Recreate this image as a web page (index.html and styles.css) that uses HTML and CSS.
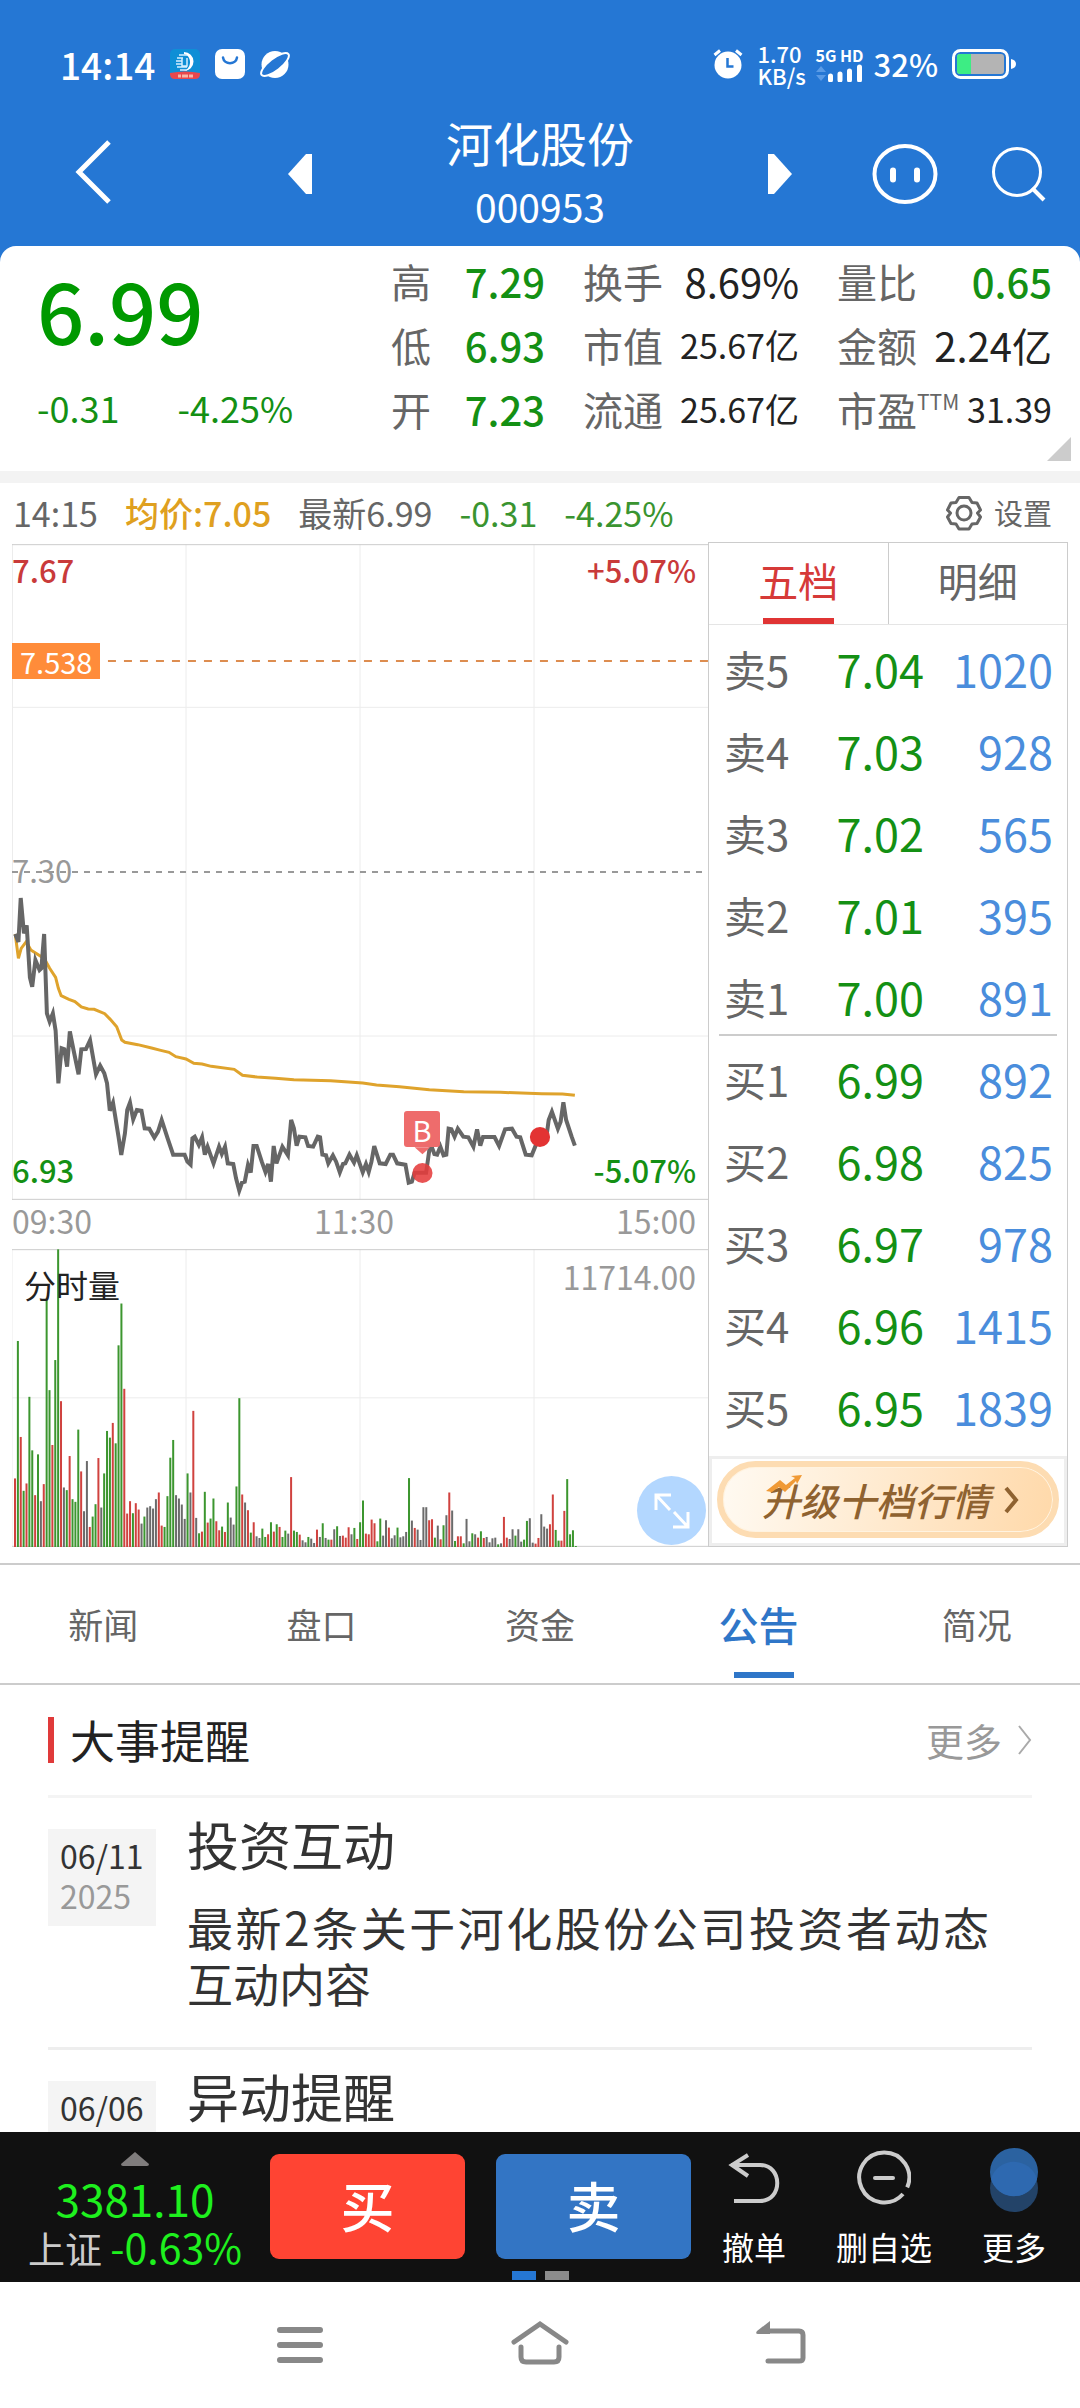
FILE: index.html
```html
<!DOCTYPE html>
<html lang="zh-CN">
<head>
<meta charset="utf-8">
<meta name="viewport" content="width=device-width, initial-scale=1">
<title>河化股份 000953</title>
<link rel="stylesheet" href="styles.css">
</head>
<body>
<div class="app">
  <header class="top">
    <div class="status">
      <span class="clock">14:14</span>
      <svg class="status-icon" width="30" height="30" viewBox="0 0 30 30" aria-hidden="true">
        <rect width="30" height="30" rx="5" fill="#0f8fd6"/>
        <path d="M0 24Q15 21 30 24V25Q30 30 25 30H5Q0 30 0 25Z" fill="#e8474c"/>
        <path d="M14 3a9.500 9.500 0 0 1 0 19c8-3 8-15 0-17" fill="#fff"/>
        <path d="M9 6h8M7 9h6M6 12h6M6 15h6M7 18h10M10 21h7M12 9v8h5V9" stroke="#d5f0ff" stroke-width="1.500" fill="none"/>
        <path d="M8 27h3M12 27h6M19 27h4" stroke="#f9b6a8" stroke-width="3"/>
      </svg>
      <svg class="status-icon" width="30" height="30" viewBox="0 0 30 30" aria-hidden="true">
        <rect width="30" height="30" rx="7" fill="#fff"/>
        <path d="M8 8.500c1 7.500 13 7.500 14 0" stroke="#2577d4" stroke-width="2.500" fill="none" stroke-linecap="round"/>
      </svg>
      <svg class="status-icon" width="30" height="30" viewBox="0 0 30 30" aria-hidden="true">
        <circle cx="15" cy="15.500" r="13.500" fill="#fff"/>
        <ellipse cx="15" cy="15.500" rx="17" ry="6" transform="rotate(-38 15 15.500)" fill="#2577d4" stroke="#fff" stroke-width="2"/>
      </svg>
      <span class="status-gap"></span>
      <svg class="alarm" width="30" height="30" viewBox="0 0 30 30" aria-hidden="true">
        <circle cx="15" cy="16" r="13.500" fill="#fff"/>
        <path d="M1.500 6 7 1.500M28.500 6 23 1.500" stroke="#fff" stroke-width="3"/>
        <path d="M14.500 9v8.500h6" stroke="#2577d4" stroke-width="2.500" fill="none"/>
      </svg>
      <span class="speed"><span>1.70</span><span>KB/s</span></span>
      <span class="signal">
        <span class="net">5G HD</span>
        <svg width="48" height="18" viewBox="0 0 48 18" aria-hidden="true">
          <path d="M1 8 6 2l5 6zM1 11l5 6 5-6z" fill="#5a9be6"/>
          <path d="M15.500 12v4M25 10v6M34.500 7v9M44.500 3v13" stroke="#fff" stroke-width="5" stroke-linecap="round"/>
        </svg>
      </span>
      <span class="percent">32%</span>
      <svg class="battery" width="64" height="30" viewBox="0 0 64 30" aria-hidden="true">
        <rect x="1.500" y="1.500" width="54" height="27" rx="7" fill="none" stroke="#fff" stroke-width="3"/>
        <rect x="5" y="5" width="47" height="20" rx="3" fill="#b4b4b4"/>
        <path d="M8 5h11v20H8q-3 0-3-3V8q0-3 3-3" fill="#3ded84"/>
        <path d="M59 10q5 1 5 5t-5 5z" fill="#fff"/>
      </svg>
    </div>
    <nav class="titlebar">
      <button class="icon-btn back" aria-label="返回">
        <svg width="38" height="68" viewBox="0 0 38 68"><path d="M34 4 4 34l30 30" fill="none" stroke="#fff" stroke-width="5"/></svg>
      </button>
      <div class="stock">
        <button class="icon-btn" aria-label="上一只"><svg width="24" height="40" viewBox="0 0 24 40"><path d="M0 20 18 0h6v40h-6z" fill="#fff"/></svg></button>
        <h1 class="stock-name">河化股份<small class="stock-code">000953</small></h1>
        <button class="icon-btn" aria-label="下一只"><svg width="24" height="40" viewBox="0 0 24 40"><path d="M24 20 6 0H0v40h6z" fill="#fff"/></svg></button>
      </div>
      <div class="tools">
        <button class="icon-btn" aria-label="助手">
          <svg width="66" height="62" viewBox="0 0 66 62"><ellipse cx="33" cy="31" rx="30.500" ry="28" fill="none" stroke="#fff" stroke-width="4"/><path d="M21 27.500v9M45 27.500v9" stroke="#fff" stroke-width="6" stroke-linecap="round"/></svg>
        </button>
        <button class="icon-btn" aria-label="搜索">
          <svg width="56" height="56" viewBox="0 0 56 56"><circle cx="26" cy="26" r="23.500" fill="none" stroke="#fff" stroke-width="3"/><path d="m41 42 12 12" stroke="#fff" stroke-width="4"/></svg>
        </button>
      </div>
    </nav>
  </header>

  <main class="content">
    <section class="quote">
      <div class="last">
        <strong class="last-price">6.99</strong>
        <div class="last-change"><span>-0.31</span><span>-4.25%</span></div>
      </div>
      <dl class="stats">
        <div><dt>高</dt><dd class="down">7.29</dd></div>
        <div><dt>低</dt><dd class="down">6.93</dd></div>
        <div><dt>开</dt><dd class="down">7.23</dd></div>
      </dl>
      <dl class="stats">
        <div><dt>换手</dt><dd>8.69%</dd></div>
        <div><dt>市值</dt><dd class="small">25.67亿</dd></div>
        <div><dt>流通</dt><dd class="small">25.67亿</dd></div>
      </dl>
      <dl class="stats">
        <div><dt>量比</dt><dd class="down">0.65</dd></div>
        <div><dt>金额</dt><dd>2.24亿</dd></div>
        <div><dt>市盈<sup>TTM</sup></dt><dd class="small">31.39</dd></div>
      </dl>
      <svg class="corner" width="24" height="24" viewBox="0 0 24 24" aria-hidden="true"><path d="M24 0v24H0z" fill="#ccc"/></svg>
    </section>

    <section class="market">
      <div class="tick">
        <span>14:15</span>
        <span class="avg">均价:7.05</span>
        <span>最新6.99</span>
        <span class="down-soft">-0.31</span>
        <span class="down-soft">-4.25%</span>
        <button class="settings">
          <svg width="36" height="36" viewBox="0 0 36 36" aria-hidden="true"><path d="M13 2.500h10l3 5 5 .5 3.500 7-3 3 3 4-3.500 6.500-5 .5-3 5H13l-3-5-5-.5L1.500 22l3-4-3-3L5 8l5-.5z" fill="none" stroke="#666" stroke-width="3" stroke-linejoin="round"/><circle cx="18" cy="18" r="7" fill="none" stroke="#666" stroke-width="3"/></svg>
          设置
        </button>
      </div>

      <div class="board">
        <div class="charts">
          <div class="price-chart">
            <svg class="plot" viewBox="0 0 1516 1968" preserveAspectRatio="none" role="img" aria-label="分时走势">
              <g class="grid"><path d="M1 0v1968M379 0v1968M758 0v1968M1137 0v1968M0 490h1516M0 1476h1516"/></g>
              <path class="frame" d="M0 2h1516M0 1966h1516"/>
              <path class="limit" d="M209 351h1307"/>
              <path class="prev-close" d="M0 984h1516"/>
              <g transform="translate(-26 948)">
                <polyline class="avg-line" points="33,222 40,295 46,265 57,245 67,270 90,290 98,300 108,325 121,352 127,385 133,407 150,418 163,425 177,441 192,447 205,448 228,461 240,478 254,500 265,540 272,547 300,554 330,564 350,571 368,577 383,590 405,597 422,610 440,612 460,619 510,628 528,646 560,651 600,655 640,659 720,662 790,669 820,675 870,680 935,689 1010,695 1090,697 1180,701 1225,702 1252,706"/>
                <polyline class="price-line" points="33,222 40,246 45,114 52,220 58,196 65,352 70,380 77,300 86,330 90,325 96,222 102,460 108,485 115,460 121,512 127,670 134,565 140,568 146,620 152,514 160,570 171,643 177,568 187,567 196,541 209,643 218,617 227,640 233,670 239,752 246,728 258,830 264,885 272,820 277,750 283,728 290,778 298,750 308,752 315,805 325,806 336,833 344,815 352,780 365,835 377,884 402,884 408,905 415,914 419,835 424,830 433,855 440,832 446,884 452,860 465,910 477,860 483,882 490,860 496,910 508,912 514,955 521,992 527,968 533,965 540,915 546,938 552,858 559,858 570,905 578,936 584,912 590,965 596,858 602,910 615,860 627,886 634,780 640,805 646,857 652,830 665,832 671,858 682,860 692,830 697,832 702,884 710,886 715,910 725,886 732,905 740,937 747,912 752,910 761,884 771,908 777,886 790,937 797,912 803,936 809,905 815,858 827,910 840,912 850,884 856,884 865,910 883,914 890,968 897,965 903,938 928,938 935,870 940,860 946,882 952,884 959,860 966,886 972,884 977,806 983,808 990,830 997,806 1009,830 1020,832 1031,860 1039,808 1046,857 1052,831 1077,831 1087,858 1100,808 1115,806 1125,830 1133,832 1145,884 1158,886 1170,845 1176,831 1190,831 1195,780 1202,755 1215,806 1221,785 1227,727 1233,780 1245,830 1252,857"/>
                <path d="M903 862h34l-17 21z" fill="#ee6c6c"/>
                <ellipse cx="920" cy="939" rx="22" ry="30" fill="#e53c3c" fill-opacity=".88"/>
                <ellipse cx="1176" cy="831" rx="22" ry="30" fill="#e33333"/>
              </g>
            </svg>
            <span class="label high">7.67</span>
            <span class="label high-pct">+5.07%</span>
            <span class="label alert">7.538</span>
            <span class="label mid">7.30</span>
            <span class="label low">6.93</span>
            <span class="label low-pct">-5.07%</span>
            <span class="label buy-mark">B</span>
          </div>
          <div class="hours"><span>09:30</span><span>11:30</span><span>15:00</span></div>
          <div class="volume-chart">
            <svg class="plot" viewBox="0 0 696 891" preserveAspectRatio="none" role="img" aria-label="分时量">
              <g class="grid"><path d="M0 0v891M174 0v891M348 0v891M522 0v891M0 445h696"/></g>
              <path class="frame" d="M0 2h696M0 889h696"/>
              <g id="volume-bars"></g>
            </svg>
            <span class="label vol-name">分时量</span>
            <span class="label vol-max">11714.00</span>
            <button class="expand" aria-label="放大">
              <svg width="36" height="36" viewBox="0 0 36 36"><path d="M2 17V2h15M3 3l13 14M34 19v15H19M33 33 20 19" fill="none" stroke="#fff" stroke-width="3"/></svg>
            </button>
          </div>
        </div>

        <div class="book">
          <div class="book-tabs">
            <button class="book-tab active">五档</button>
            <button class="book-tab">明细</button>
          </div>
          <table class="levels">
            <tbody class="asks">
              <tr><th>卖5</th><td>7.04</td><td>1020</td></tr>
              <tr><th>卖4</th><td>7.03</td><td>928</td></tr>
              <tr><th>卖3</th><td>7.02</td><td>565</td></tr>
              <tr><th>卖2</th><td>7.01</td><td>395</td></tr>
              <tr><th>卖1</th><td>7.00</td><td>891</td></tr>
            </tbody>
            <tbody>
              <tr><th>买1</th><td>6.99</td><td>892</td></tr>
              <tr><th>买2</th><td>6.98</td><td>825</td></tr>
              <tr><th>买3</th><td>6.97</td><td>978</td></tr>
              <tr><th>买4</th><td>6.96</td><td>1415</td></tr>
              <tr><th>买5</th><td>6.95</td><td>1839</td></tr>
            </tbody>
          </table>
          <div class="promo">
            <button class="upgrade">
              <span class="upgrade-text">升级十档行情</span>
              <svg width="16" height="28" viewBox="0 0 16 28" aria-hidden="true"><path d="m2 2 10 12L2 26" fill="none" stroke="#8f6230" stroke-width="4"/></svg>
              <svg class="trend" width="38" height="18" viewBox="0 0 38 18" aria-hidden="true"><path d="M1 16 15 5l6 5 9-7-4-2 11-1-5 9-1-3-11 11-6-5-7 5z" fill="#f09a36"/></svg>
            </button>
          </div>
        </div>
      </div>
    </section>

    <nav class="tabs">
      <a class="tab" href="#news">新闻</a>
      <a class="tab" href="#depth">盘口</a>
      <a class="tab" href="#funds">资金</a>
      <a class="tab active" href="#notice">公告</a>
      <a class="tab" href="#brief">简况</a>
    </nav>

    <section class="events" id="notice">
      <header class="events-head">
        <h2>大事提醒</h2>
        <a class="more" href="#more">更多
          <svg width="14" height="30" viewBox="0 0 14 30" aria-hidden="true"><path d="m1 1 11 14L1 29" fill="none" stroke="#aaa" stroke-width="2"/></svg>
        </a>
      </header>
      <article class="event">
        <time class="date" datetime="2025-06-11">06/11<span>2025</span></time>
        <div class="event-body">
          <h3>投资互动</h3>
          <p>最新2条关于河化股份公司投资者动态互动内容</p>
        </div>
      </article>
      <article class="event">
        <time class="date" datetime="2025-06-06">06/06<span>2025</span></time>
        <div class="event-body"><h3>异动提醒</h3></div>
      </article>
    </section>
  </main>

  <footer class="trade">
    <div class="index">
      <svg width="30" height="16" viewBox="0 0 30 16" aria-hidden="true"><path d="M15 1 29 13q0 2-2 2H3q-2 0-2-2z" fill="#807d7d"/></svg>
      <span class="index-value">3381.10</span>
      <span class="index-row">上证 <b>-0.63%</b></span>
    </div>
    <button class="order buy">买</button>
    <button class="order sell">卖</button>
    <div class="actions">
      <button class="action">
        <svg width="54" height="56" viewBox="0 0 54 56" aria-hidden="true"><path d="M21 5 5 15l16 11M4 15h29c23 0 23 36 0 36H7" fill="none" stroke="#ccc" stroke-width="4"/></svg>
        撤单
      </button>
      <button class="action">
        <svg width="54" height="56" viewBox="0 0 54 56" aria-hidden="true"><path d="M46 44A25 25 0 1 1 50.200 37.400" fill="none" stroke="#ccc" stroke-width="4"/><path d="M18 28h18" stroke="#ccc" stroke-width="4" stroke-linecap="round"/></svg>
        删自选
      </button>
      <button class="action">
        <svg width="54" height="64" viewBox="0 0 54 64" aria-hidden="true"><circle cx="27" cy="40" r="24" fill="#234368"/><circle cx="27" cy="24" r="24" fill="#2b62a0"/><path d="M4 31a24 24 0 0 1 46 0 24 24 0 0 1-46 0" fill="#2e69b0"/></svg>
        更多
      </button>
    </div>
    <div class="pager"><i class="on"></i><i></i></div>
  </footer>

  <nav class="system">
    <button class="icon-btn" aria-label="最近任务"><svg width="60" height="46" viewBox="0 0 60 46"><path d="M10 10h40M10 25h40M10 40h40" stroke="#888" stroke-width="6" stroke-linecap="round"/></svg></button>
    <button class="icon-btn" aria-label="主页"><svg width="60" height="46" viewBox="0 0 60 46"><path d="M4 22 30 4l26 18M11 27v10q0 5 5 5h28q5 0 5-5V27" fill="none" stroke="#888" stroke-width="5" stroke-linecap="round"/></svg></button>
    <button class="icon-btn" aria-label="返回上级"><svg width="60" height="46" viewBox="0 0 60 46"><path d="M18 11h31q4 0 4 4v23q0 3-4 3H18" fill="none" stroke="#888" stroke-width="5" stroke-linecap="round"/><path d="M7 11 20 1v13H8q-3 0-1-3" fill="#888"/></svg></button>
  </nav>
</div>
<script src="volume.js"></script>
</body>
</html>
```
FILE: volume.js
```js
// One entry per minute: colour key (r up, g down, k flat) and bar height.
const minutes = `r205 g616 r329 g168 r190 g449 g289 r155 g277 k137 r188 g740 g469 r305 g559 g890 r436 k178 g170 r272
g143 g135 g351 r226 k107 k257 r60 g91 g128 r266 k118 g220 g347 g327 r371 g310 g603 g728 r473 r100
r137 g101 r131 r112 k70 g91 k118 k122 k115 k143 r163 r64 g60 g152 g267 g320 k155 k145 k127 k84
g220 k163 r407 k87 g41 r46 g165 r73 g85 g145 r77 r50 g61 r45 g133 k88 k67 g181 g445 r157
k133 r110 g43 r74 k32 k27 g55 g30 r38 g74 r46 g68 r60 g30 g49 k40 r209 g49 g45 r37
k20 k14 g30 k25 k12 r52 k30 g71 k27 g22 r22 k53 g62 k33 r34 r28 r59 k38 g57 r24
g74 g139 r40 r38 r82 r71 g17 g85 k34 k80 r58 k26 k35 g58 k29 k32 k45 g206 k79 r57
k52 k21 k119 k119 r80 r83 g28 k64 r23 g65 k95 r163 k109 g18 r32 r32 g11 k84 k17 g41
k38 r28 g47 r27 k30 k14 k26 k28 g8 k11 r90 r28 k24 k53 g34 k53 k16 g22 g78 k86
k13 r10 r27 k98 k61 k55 r68 r157 g51 g19 r19 r108 g203 g38 g50 g3`.split(/\s+/);
const colours = { r: "#d0423f", g: "#3c962f", k: "#6b6b6b" };
const plot = { width: 696, height: 891, session: 242 };
const step = plot.width / plot.session;
const group = document.getElementById("volume-bars");

minutes.forEach((entry, i) => {
  const height = Number(entry.slice(1));
  const bar = document.createElementNS("http://www.w3.org/2000/svg", "rect");
  bar.setAttribute("x", 2 + i * step);
  bar.setAttribute("y", plot.height - height);
  bar.setAttribute("width", 2);
  bar.setAttribute("height", height);
  bar.setAttribute("fill", colours[entry[0]]);
  group.appendChild(bar);
});
```
FILE: styles.css
```css
* { box-sizing: border-box; }
body, h1, h2, h3, p, dl, dd { margin: 0; }
body {
  font-family: "Noto Sans CJK SC", "Noto Sans", sans-serif;
  color: #222;
  background: #fff;
}
button { font: inherit; color: inherit; background: none; border: 0; padding: 0; cursor: pointer; }
a { color: inherit; text-decoration: none; }
svg { display: block; flex: none; }
.icon-btn { display: flex; }

.app { display: flex; flex-direction: column; height: 100vh; overflow: hidden; }

/* Header */
.top { background: #2577d4; color: #fff; padding-top: 34px; }
.status { display: flex; align-items: center; height: 60px; padding: 0 64px 0 60px; }
.clock { font-size: 37px; line-height: 60px; font-weight: 500; }
.status-icon { margin-left: 15px; overflow: hidden; }
.status-gap { flex: 1; }
.speed { display: flex; flex-direction: column; width: 58px; margin-left: 14px; font-size: 22px; line-height: 22px; font-weight: 500; }
.signal { display: flex; flex-direction: column; }
.net { font-size: 16px; line-height: 18px; font-weight: 700; }
.percent { font-size: 31px; line-height: 60px; font-weight: 500; margin: 0 14px 0 10px; }
.titlebar { display: grid; grid-template-columns: 1fr 504px 1fr; align-items: center; height: 152px; padding-top: 8px; }
.back { padding: 0 0 4px 75px; }
.stock { display: flex; align-items: center; justify-content: space-between; }
.stock-name { font-size: 47px; line-height: 64px; font-weight: 400; text-align: center; }
.stock-code { display: block; font-size: 39px; line-height: 64px; }
.tools { display: flex; align-items: center; justify-content: flex-end; gap: 53px; padding-right: 33px; }

.content { flex: 1; min-height: 0; overflow: hidden; background: #2577d4; }

/* Quote summary */
.quote {
  position: relative;
  display: grid;
  grid-template-columns: 1fr 154px 216px 215px;
  column-gap: 38px;
  padding: 3px 28px 30px 37px;
  background: #fff;
  border-radius: 16px 16px 0 0;
}
.last { color: #009900; }
.last-price { display: block; margin-bottom: 6px; font-size: 83px; line-height: 120px; font-weight: 500; }
.last-change { display: flex; gap: 58px; font-size: 36px; line-height: 64px; color: #149014; }
.stats div { display: flex; justify-content: space-between; align-items: center; font-size: 40px; line-height: 64px; white-space: nowrap; }
.stats dt { color: #666; }
.stats sup { font-size: 21px; line-height: 21px; vertical-align: 16px; }
.stats .small { font-size: 34px; }
.down, .stats .down { color: #149014; font-weight: 500; }
.corner { position: absolute; right: 9px; bottom: 10px; }

/* Chart and order book */
.market { background: #fff; border-top: 12px solid #f3f3f3; padding-bottom: 16px; }
.tick { display: flex; align-items: center; gap: 27px; height: 59px; padding: 0 28px 0 13px; font-size: 34px; line-height: 59px; color: #666; white-space: nowrap; }
.avg { color: #dfa020; font-weight: 500; }
.down-soft { color: #3a9430; }
.settings { display: flex; align-items: center; gap: 12px; margin-left: auto; font-size: 29px; }
.board { display: flex; padding: 0 12px; }
.charts { flex: 1; min-width: 0; padding-top: 2px; }
.price-chart, .volume-chart { position: relative; }
.price-chart { height: 656px; }
.volume-chart { height: 298px; }
.plot { width: 100%; height: 100%; }
.plot path, .plot polyline { vector-effect: non-scaling-stroke; }
.grid path { fill: none; stroke: #ececec; stroke-width: 1px; }
.frame { stroke: #ccc; stroke-width: 1px; }
.limit { stroke: #dd8d50; stroke-width: 2px; stroke-dasharray: 8 8; }
.prev-close { stroke: #999; stroke-width: 2px; stroke-dasharray: 6 6; }
.avg-line { fill: none; stroke: #dfa32c; stroke-width: 3px; }
.price-line { fill: none; stroke: #666; stroke-width: 4px; }
.label { position: absolute; font-size: 31px; line-height: 36px; font-weight: 500; }
.high { left: 0; top: 8px; color: #c93a3a; }
.high-pct { right: 12px; top: 8px; color: #c93a3a; }
.alert { left: 0; top: 99px; padding: 0 8px; font-size: 29px; font-weight: 400; color: #fff; background: #ff8c3a; }
.mid { left: 0; top: 308px; color: #999; font-weight: 400; }
.low { left: 0; bottom: 12px; color: #149014; }
.low-pct { right: 12px; bottom: 12px; color: #149014; }
.buy-mark { left: 392px; top: 567px; width: 36px; border-radius: 3px; background: #ee6c6c; color: #fff; text-align: center; font-size: 29px; font-weight: 400; }
.hours { display: flex; justify-content: space-between; height: 49px; padding: 0 12px 0 0; font-size: 32px; line-height: 40px; color: #999; }
.vol-name { left: 12px; top: 17px; font-size: 32px; color: #222; font-weight: 400; }
.vol-max { right: 12px; top: 9px; font-size: 32px; color: #999; font-weight: 400; }
.expand { position: absolute; right: 2px; bottom: 2px; display: grid; place-items: center; width: 69px; height: 69px; border-radius: 50%; background: #b3d7ff; }

.book { display: flex; flex-direction: column; width: 360px; border: 1px solid #ccc; }
.book-tabs { display: flex; height: 82px; border-bottom: 1px solid #e5e5e5; }
.book-tab { position: relative; display: flex; justify-content: center; flex: 1; font-size: 40px; line-height: 74px; color: #666; }
.book-tab + .book-tab { border-left: 1px solid #ccc; }
.book-tab.active { color: #d63a38; }
.book-tab.active::after { content: ""; position: absolute; left: 30%; right: 30%; bottom: 0; height: 6px; background: #e03434; }
.levels { width: 100%; border-collapse: collapse; padding: 0; margin-top: 3px; }
.levels tr { height: 82px; }
.levels th { padding: 0 0 0 15px; width: 90px; text-align: left; font-size: 42px; font-weight: 400; line-height: 60px; color: #666; }
.levels td { padding: 0; text-align: right; font-size: 45px; line-height: 60px; color: #149014; }
.levels td:last-child { padding-right: 14px; width: 143px; color: #4a8ddc; }
.asks { background: linear-gradient(#ccc, #ccc) center calc(100% - 2px) / calc(100% - 20px) 2px no-repeat; }
.promo { flex: 1; margin-top: 8px; padding: 2px 5px 3px 5px; border: 3px solid #eee; }
.upgrade {
  position: relative;
  display: flex;
  align-items: center;
  justify-content: center;
  gap: 14px;
  width: 100%;
  height: 77px;
  padding-left: 6px;
  border: 6px solid #fddcb2;
  border-radius: 39px;
  background: linear-gradient(100deg, #fffaf2, #ffd9aa);
  box-shadow: inset 0 0 0 1px #fff3e0;
}
.upgrade-text { font-size: 38px; line-height: 60px; font-weight: 500; font-style: italic; color: #8f6230; }
.trend { position: absolute; left: 42px; top: 8px; }

/* Section tabs */
.tabs { display: grid; grid-template-columns: repeat(5, 1fr); height: 122px; margin: 0 -6px; background: #fff; border-top: 2px solid #ccc; border-bottom: 2px solid #ccc; text-align: center; }
.tab { position: relative; font-size: 35px; line-height: 118px; color: #666; }
.tab.active { font-size: 40px; font-weight: 500; color: #2f76c8; }
.tab.active::after { content: ""; position: absolute; left: calc(50% - 24px); width: 60px; bottom: 5px; height: 6px; background: #2f76c8; }

/* Events */
.events { padding: 0 48px; background: #fff; }
.events-head { display: flex; align-items: center; justify-content: space-between; height: 113px; border-bottom: 3px solid #f4f4f4; }
.events-head h2 { padding-left: 16px; border-left: 6px solid #e03a3a; font-size: 45px; line-height: 46px; font-weight: 400; color: #222; }
.more { display: flex; align-items: center; gap: 16px; font-size: 38px; line-height: 56px; color: #999; }
.event { display: grid; grid-template-columns: 108px 1fr; column-gap: 31px; align-items: start; padding: 16px 0 37px; border-bottom: 3px solid #eee; }
.date { margin-top: 15px; padding: 6px 0 11px 12px; background: #f4f4f4; font-size: 32px; line-height: 40px; color: #333; white-space: nowrap; }
.date span { display: block; color: #999; }
.event-body { padding-right: 43px; }
.event-body h3 { font-size: 52px; line-height: 60px; font-weight: 400; color: #333; }
.event-body p { margin-top: 24px; font-size: 46px; line-height: 56px; text-align: justify; color: #333; }

/* Trading bar */
.trade { position: relative; display: flex; align-items: flex-start; height: 150px; padding: 22px 34px 0 24px; background: #111; color: #fff; }
.index { display: flex; flex-direction: column; align-items: center; width: 222px; margin: -3px 24px 0 0; white-space: nowrap; }
.index-value { margin-top: 5px; font-size: 44px; line-height: 52px; color: #1ef01e; }
.index-row { font-size: 37px; line-height: 44px; color: #ccc; }
.index-row b { font-size: 41px; font-weight: 400; color: #1ef01e; }
.order { width: 195px; height: 105px; margin-right: 31px; padding-bottom: 4px; border-radius: 9px; font-size: 54px; line-height: 60px; font-weight: 500; }
.buy { background: #ff4433; }
.sell { background: #3375c4; }
.actions { flex: 1; display: flex; justify-content: space-between; }
.action { display: flex; flex-direction: column; align-items: center; justify-content: flex-end; height: 117px; margin-top: -5px; gap: 20px; font-size: 32px; line-height: 40px; white-space: nowrap; }
.action:last-child { gap: 14px; }
.pager { position: absolute; left: 0; right: 0; bottom: 2px; display: flex; justify-content: center; gap: 9px; }
.pager i { width: 24px; height: 9px; background: #8c8c8c; }
.pager .on { background: #2577d4; }

.system { display: flex; align-items: center; justify-content: center; gap: 180px; height: 126px; padding-bottom: 4px; background: #fff; }
```
